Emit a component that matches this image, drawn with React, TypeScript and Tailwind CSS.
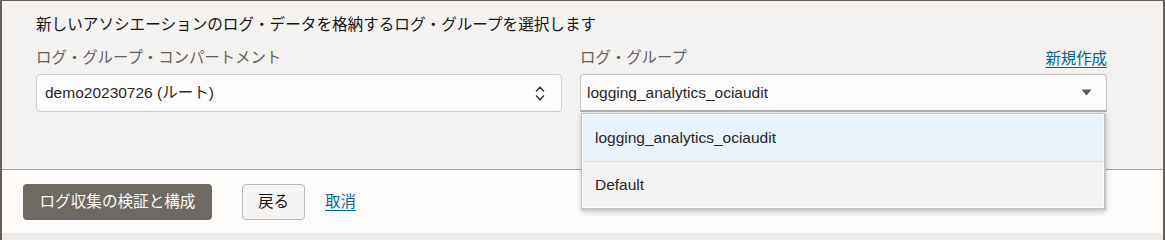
import React from 'react';

const font = { fontFamily: '"Liberation Sans", "Noto Sans CJK JP", sans-serif' };

function UpDown() {
  return (
    <svg width="10" height="17" viewBox="0 0 10 17" fill="none" stroke="#3b3733" strokeWidth="1.6" strokeLinecap="round" strokeLinejoin="round">
      <path d="M1.5 6 L5 2.2 L8.5 6" />
      <path d="M1.5 11 L5 14.8 L8.5 11" />
    </svg>
  );
}

function Caret() {
  return (
    <svg width="11" height="7" viewBox="0 0 11 7">
      <path d="M0.5 0.5 H10.5 L5.5 6.5 Z" fill="#5e5954" />
    </svg>
  );
}

export default function App(): JSX.Element {
  const options = ['logging_analytics_ociaudit', 'Default'];

  return (
    <div
      className="w-[1165px] h-[240px] flex flex-col border-t border-x-2 border-[#665e58] bg-[#f3f2f1] text-[#161513] overflow-hidden"
      style={font}
    >
      {/* selection panel */}
      <div className="h-[169px] shrink-0 bg-[#f3f2f1] border-b border-[#a39e99] pl-[34px] pr-[56px] pt-[13px]">
        <p className="text-[15.6px] leading-[22px]">
          新しいアソシエーションのログ・データを格納するログ・グループを選択します
        </p>

        <div className="grid grid-cols-[526px_527px] gap-x-[18px] mt-[11px]">
          <div>
            <div className="h-[22px] leading-[22px] text-[15.4px] text-[#65605b]">
              ログ・グループ・コンパートメント
            </div>
            <div className="mt-[5px] h-[38px] rounded-[4px] border border-[#cfcbc8] bg-[#fcfcfc] flex items-center pl-[8px] pr-[16px]">
              <span className="flex-1 text-[15.5px] text-[#2a2724]">demo20230726 (ルート)</span>
              <UpDown />
            </div>
          </div>

          <div>
            <div className="h-[22px] flex items-center justify-between">
              <span className="leading-[22px] text-[15.4px] text-[#65605b]">ログ・グループ</span>
              <a className="text-[15.4px] leading-[22px] text-[#00688c] underline underline-offset-[3px] mt-[2px]">
                新規作成
              </a>
            </div>
            <div className="relative mt-[5px]">
              <div className="h-[38px] rounded-t-[4px] border border-[#c4c1be] border-b-2 border-b-[#b3b0ad] bg-[#fcfcfc] flex items-center pl-[6px] pr-[14px]">
                <span className="flex-1 text-[15.5px] text-[#2a2724]">logging_analytics_ociaudit</span>
                <Caret />
              </div>

              {/* open listbox */}
              <div className="absolute left-[1px] right-[1px] top-[39px] z-10 border border-[#c6c4c2] border-r-2 border-b-2 bg-[#fbfbfb] p-[1px] shadow-[0_2px_5px_rgba(0,0,0,0.22)]">
                {options.map((o, i) => (
                  <div
                    key={o}
                    className={
                      i === 0
                        ? 'h-[47px] flex items-center pl-[12px] bg-[#e8f2fa] border-b border-[#dadcde] text-[15.5px] text-[#2a2724]'
                        : 'h-[45px] flex items-center pl-[12px] bg-[#f3f2f1] text-[15.5px] text-[#2a2724]'
                    }
                  >
                    {o}
                  </div>
                ))}
              </div>
            </div>
          </div>
        </div>
      </div>

      {/* footer */}
      <div className="h-[63px] shrink-0 bg-[#fcfbfa] flex items-center pl-[21px]">
        <button className="h-[36px] w-[189px] rounded-[4px] bg-[#6f6964] text-[#fcfbfa] text-[15.6px]">
          ログ収集の検証と構成
        </button>
        <button className="ml-[30px] h-[36px] w-[63px] rounded-[4px] border border-[#bcb8b5] bg-[#f5f4f2] text-[15.6px] text-[#161513]">
          戻る
        </button>
        <a className="ml-[20px] text-[15.4px] text-[#00688c] underline underline-offset-[3px]">取消</a>
      </div>

      <div className="flex-1 bg-[#eeecea]" />
    </div>
  );
}
